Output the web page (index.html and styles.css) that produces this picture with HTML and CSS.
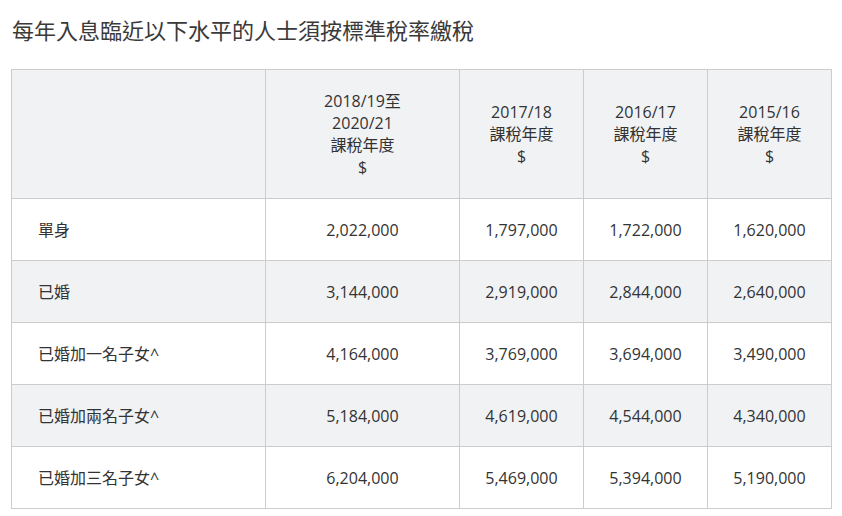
FILE: index.html
```html
<!DOCTYPE html>
<html lang="zh-Hant">
<head>
<meta charset="utf-8">
<title>標準稅率</title>
<link rel="stylesheet" href="styles.css">
</head>
<body>
<main class="page">
  <h1 class="title">每年入息臨近以下水平的人士須按標準稅率繳稅</h1>
  <table class="tax-table">
    <colgroup>
      <col class="c-label">
      <col class="c-wide">
      <col class="c-year">
      <col class="c-year">
      <col class="c-year">
    </colgroup>
    <thead>
      <tr>
        <th></th>
        <th>2018/19至<br>2020/21<br>課稅年度<br>$</th>
        <th>2017/18<br>課稅年度<br>$</th>
        <th>2016/17<br>課稅年度<br>$</th>
        <th>2015/16<br>課稅年度<br>$</th>
      </tr>
    </thead>
    <tbody>
      <tr>
        <td>單身</td><td>2,022,000</td><td>1,797,000</td><td>1,722,000</td><td>1,620,000</td>
      </tr>
      <tr class="alt">
        <td>已婚</td><td>3,144,000</td><td>2,919,000</td><td>2,844,000</td><td>2,640,000</td>
      </tr>
      <tr>
        <td>已婚加一名子女^</td><td>4,164,000</td><td>3,769,000</td><td>3,694,000</td><td>3,490,000</td>
      </tr>
      <tr class="alt">
        <td>已婚加兩名子女^</td><td>5,184,000</td><td>4,619,000</td><td>4,544,000</td><td>4,340,000</td>
      </tr>
      <tr>
        <td>已婚加三名子女^</td><td>6,204,000</td><td>5,469,000</td><td>5,394,000</td><td>5,190,000</td>
      </tr>
    </tbody>
  </table>
</main>
</body>
</html>
```
FILE: styles.css
```css
html, body {
  margin: 0;
  padding: 0;
  background: #ffffff;
}

body {
  font-family: "Open Sans", "Noto Sans CJK TC", sans-serif;
  color: #333333;
}

.page {
  padding: 0 11px;
}

.title {
  margin: 15px 0 24px 1px;
  font-size: 22px;
  line-height: 30px;
  font-weight: 400;
  color: #3a3a3a;
}

.tax-table {
  border-collapse: collapse;
  table-layout: fixed;
  width: 821px;
  font-size: 16px;
}

.c-label { width: 254px; }
.c-wide { width: 194px; }
.c-year { width: 124px; }

.tax-table th,
.tax-table td {
  border: 1px solid #cccccc;
  text-align: center;
  vertical-align: middle;
  padding: 0;
}

.tax-table th {
  background: #f1f2f4;
  font-weight: 400;
  line-height: 22px;
  height: 128px;
}

.tax-table td {
  height: 61px;
  line-height: 22px;
}

.tax-table td:first-child {
  text-align: left;
  padding-left: 26px;
}

.tax-table tr.alt td {
  background: #f1f2f4;
}
```
